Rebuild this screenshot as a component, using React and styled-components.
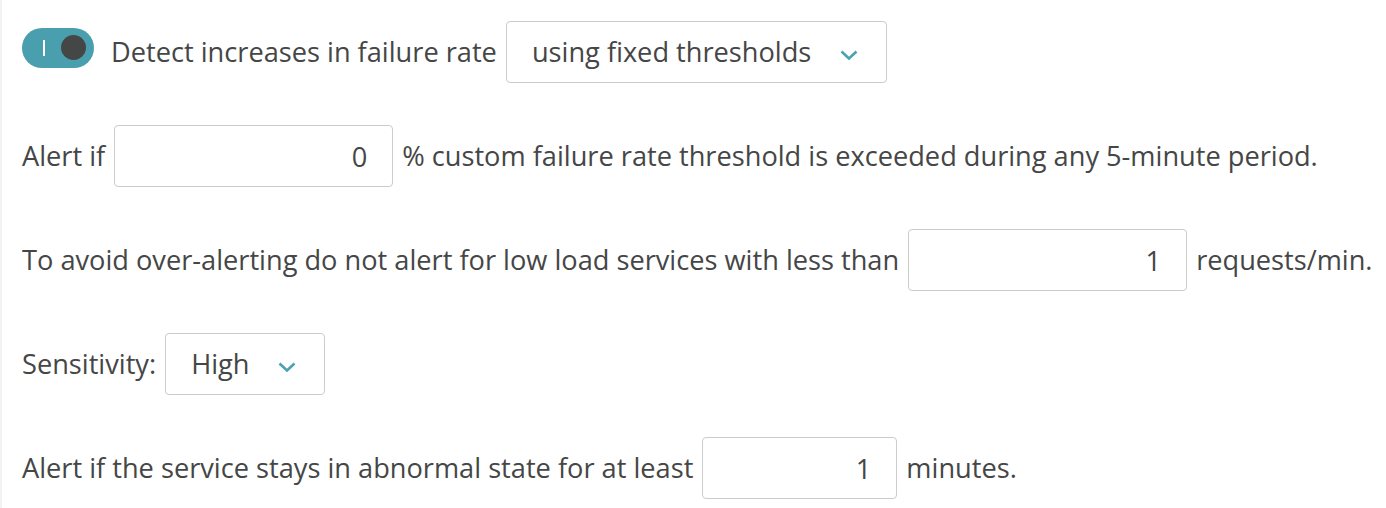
import React from "react";
import styled, { createGlobalStyle } from "styled-components";

const GlobalStyle = createGlobalStyle`
  html, body { margin: 0; background: #ffffff; }
  body {
    font-family: "Open Sans", "Noto Sans", sans-serif;
    color: #454646;
  }
`;

const Panel = styled.div`
  border-left: 2px solid #f2f2f2;
  min-height: 508px;
  box-sizing: border-box;
  padding: 21px 0 0 20px;
  display: flex;
  flex-direction: column;
  gap: 42px;
`;

const Row = styled.div`
  display: flex;
  align-items: center;
  gap: 9px;
  height: 62px;
  font-size: 27.2px;
  line-height: 1;
  white-space: nowrap;
`;

const Label = styled.span`
  color: #454646;
`;

const Toggle = styled.div`
  position: relative;
  width: 72px;
  height: 40px;
  border-radius: 20px;
  background: #4a9fae;
  align-self: flex-start;
  margin-top: 7px;
  margin-right: 8px;
  flex-shrink: 0;
`;

const ToggleBar = styled.span`
  position: absolute;
  left: 21px;
  top: 12px;
  width: 2px;
  height: 16px;
  background: #ffffff;
`;

const Knob = styled.span`
  position: absolute;
  right: 8px;
  top: 7px;
  width: 25px;
  height: 25px;
  border-radius: 50%;
  background: #454646;
`;

const Select = styled.div`
  box-sizing: border-box;
  display: inline-flex;
  align-items: center;
  gap: 29px;
  height: 62px;
  padding: 0 28px 0 25px;
  border: 1px solid #cccccc;
  border-radius: 4px;
  background: #ffffff;
  color: #454646;
`;

const Chevron = styled.svg`
  width: 18px;
  height: 10px;
  margin-top: 5px;
  flex-shrink: 0;
`;

const NumberInput = styled.input`
  box-sizing: border-box;
  width: ${p => p.$w}px;
  height: 62px;
  border: 1px solid #cccccc;
  border-radius: 4px;
  padding: 0 25px 0 12px;
  text-align: right;
  font: inherit;
  font-size: 27.2px;
  color: #454646;
  background: #ffffff;
  outline: none;
`;

function Dropdown({ value }) {
  return (
    <Select>
      <span>{value}</span>
      <Chevron viewBox="0 0 18 10" fill="none">
        <path d="M1.5 1.5 L9 8.5 L16.5 1.5" stroke="#4aa3b3" strokeWidth="2.6" />
      </Chevron>
    </Select>
  );
}

export default function App() {
  return (
    <>
      <GlobalStyle />
      <Panel>
        <Row>
          <Toggle>
            <ToggleBar />
            <Knob />
          </Toggle>
          <Label>Detect increases in failure rate</Label>
          <Dropdown value="using fixed thresholds" />
        </Row>
        <Row>
          <Label>Alert if</Label>
          <NumberInput $w={279} defaultValue="0" />
          <Label>% custom failure rate threshold is exceeded during any 5-minute period.</Label>
        </Row>
        <Row>
          <Label>To avoid over-alerting do not alert for low load services with less than</Label>
          <NumberInput $w={279} defaultValue="1" />
          <Label>requests/min.</Label>
        </Row>
        <Row>
          <Label>Sensitivity:</Label>
          <Dropdown value="High" />
        </Row>
        <Row>
          <Label>Alert if the service stays in abnormal state for at least</Label>
          <NumberInput $w={195} defaultValue="1" />
          <Label>minutes.</Label>
        </Row>
      </Panel>
    </>
  );
}
